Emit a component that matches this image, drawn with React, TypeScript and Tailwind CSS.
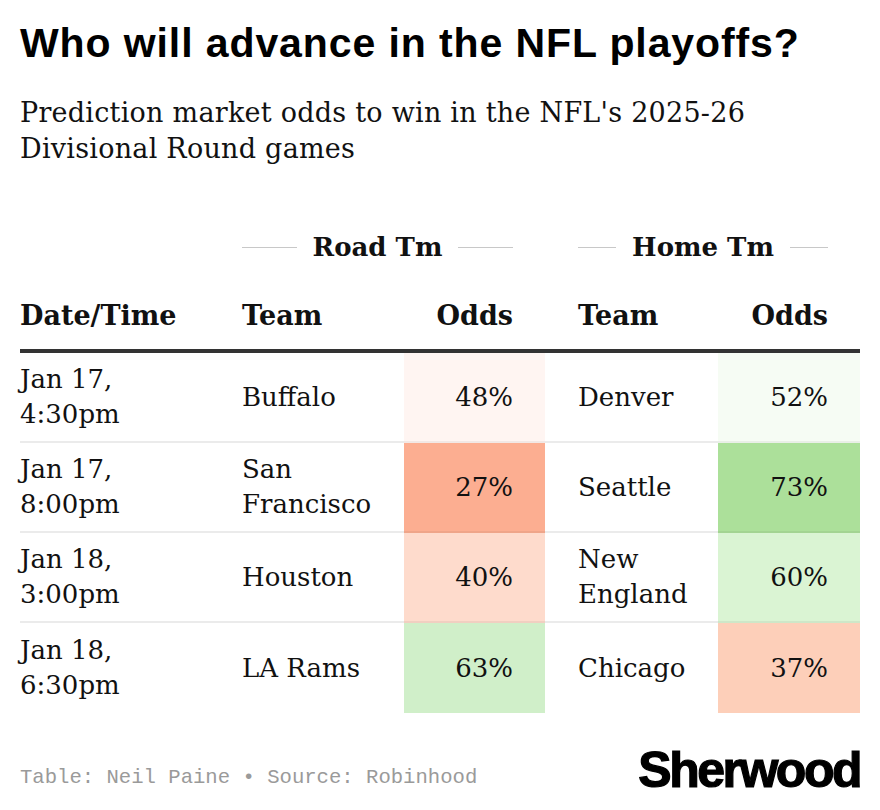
const serif = { fontFamily: '"DejaVu Serif", serif' }

type Row = {
  date: string
  time: string
  road: string
  roadOdds: string
  roadBg: string
  home: string
  homeOdds: string
  homeBg: string
}

const rows: Row[] = [
  { date: "Jan 17,", time: "4:30pm", road: "Buffalo", roadOdds: "48%", roadBg: "bg-[#fff5f2]", home: "Denver", homeOdds: "52%", homeBg: "bg-[#f6fcf4]" },
  { date: "Jan 17,", time: "8:00pm", road: "San Francisco", roadOdds: "27%", roadBg: "bg-[#fcae91]", home: "Seattle", homeOdds: "73%", homeBg: "bg-[#ace09a]" },
  { date: "Jan 18,", time: "3:00pm", road: "Houston", roadOdds: "40%", roadBg: "bg-[#fedbcc]", home: "New England", homeOdds: "60%", homeBg: "bg-[#daf4d3]" },
  { date: "Jan 18,", time: "6:30pm", road: "LA Rams", roadOdds: "63%", roadBg: "bg-[#d0efc9]", home: "Chicago", homeOdds: "37%", homeBg: "bg-[#fdcfb9]" },
]

function Spanner({ label }: { label: string }) {
  return (
    <div className="flex items-center gap-4">
      <div className="h-px flex-1 bg-[#c8c8c8]" />
      <span className="font-bold text-[26px] leading-none text-[#111]">{label}</span>
      <div className="h-px flex-1 bg-[#c8c8c8]" />
    </div>
  )
}

export default function App() {
  return (
    <div className="w-[880px] h-[810px] bg-white px-5 text-[#111] overflow-hidden">
      <h1
        className="pt-[18px] text-[41px] leading-[50px] font-bold tracking-[0.9px] text-black"
        style={{ fontFamily: '"Liberation Sans", Arial, sans-serif' }}
      >
        Who will advance in the NFL playoffs?
      </h1>
      <p className="mt-[27px] text-[27px] leading-[36px] tracking-[0.25px] text-[#111]" style={serif}>
        Prediction market odds to win in the NFL's 2025-26
        <br />
        Divisional Round games
      </p>

      <div className="mt-[60px]" style={serif}>
        {/* spanner headers */}
        <div className="grid grid-cols-[222px_303px_33px_282px] h-[40px] items-center">
          <div />
          <div className="pr-8">
            <Spanner label="Road Tm" />
          </div>
          <div />
          <div className="pr-8">
            <Spanner label="Home Tm" />
          </div>
        </div>

        {/* column headers */}
        <div className="grid grid-cols-[222px_162px_141px_173px_142px] mt-[32px] pb-[16px] border-b-4 border-[#333] font-bold text-[27px] leading-[34px]">
          <div>Date/Time</div>
          <div>Team</div>
          <div className="text-right pr-8">Odds</div>
          <div className="pl-[33px]">Team</div>
          <div className="text-right pr-8">Odds</div>
        </div>

        {/* body */}
        {rows.map((r, i) => (
          <div
            key={i}
            className="grid grid-cols-[222px_162px_141px_173px_142px] h-[90px] text-[26px] leading-[35px]"
          >
            <div className={`flex flex-col justify-center ${i < rows.length - 1 ? "border-b-2 border-[#ebebeb]" : ""}`}>
              <span>{r.date}</span>
              <span>{r.time}</span>
            </div>
            <div className={`flex items-center ${i < rows.length - 1 ? "border-b-2 border-[#ebebeb]" : ""}`}>
              {r.road}
            </div>
            <div className={`flex items-center justify-end pr-8 ${r.roadBg} ${i < rows.length - 1 ? "border-b-2 border-black/5" : ""}`}>
              {r.roadOdds}
            </div>
            <div className={`flex items-center pl-[33px] ${i < rows.length - 1 ? "border-b-2 border-[#ebebeb]" : ""}`}>
              {r.home}
            </div>
            <div className={`flex items-center justify-end pr-8 ${r.homeBg} ${i < rows.length - 1 ? "border-b-2 border-black/5" : ""}`}>
              {r.homeOdds}
            </div>
          </div>
        ))}
      </div>

      {/* footer */}
      <div className="mt-[32px] flex items-end justify-between">
        <p
          className="text-[20.6px] leading-none text-[#9a9a9a] pb-[6px]"
          style={{ fontFamily: '"Liberation Mono", monospace' }}
        >
          Table: Neil Paine • Source: Robinhood
        </p>
        <span
          className="text-[50px] leading-none font-bold text-black tracking-[-2.5px] [-webkit-text-stroke:1.2px_black]"
          style={{ fontFamily: '"Liberation Sans", Arial, sans-serif' }}
        >
          Sherwood
        </span>
      </div>
    </div>
  )
}
